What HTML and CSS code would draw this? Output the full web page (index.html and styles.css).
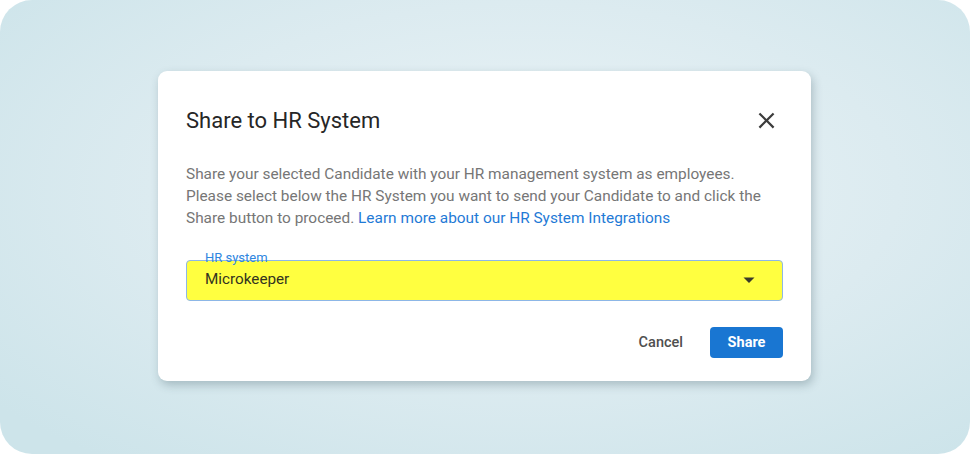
FILE: index.html
```html
<!DOCTYPE html>
<html lang="en">
<head>
<meta charset="utf-8">
<title>Share to HR System</title>
<link rel="stylesheet" href="styles.css">
</head>
<body>
<div class="stage">
  <div class="dialog">
    <div class="header">
      <h2 class="title">Share to HR System</h2>
      <button class="close" aria-label="Close">
        <svg width="27" height="27" viewBox="0 0 24 24"><path d="M19 6.41 17.59 5 12 10.59 6.41 5 5 6.41 10.59 12 5 17.59 6.41 19 12 13.41 17.59 19 19 17.59 13.41 12z" fill="#3c3c3c"/></svg>
      </button>
    </div>
    <p class="desc">Share your selected Candidate with your HR management system as employees. Please select below the HR System you want to send your Candidate to and click the Share button to proceed. <a href="#" class="link">Learn more about our HR System Integrations</a></p>
    <div class="select">
      <span class="select-label">HR system</span>
      <span class="select-value">Microkeeper</span>
      <svg class="arrow" width="24" height="24" viewBox="0 0 24 24"><path d="M6.5 9.5l5.5 5.5 5.5-5.5z" fill="#3a3a2a"/></svg>
    </div>
    <div class="actions">
      <button class="btn-text">Cancel</button>
      <button class="btn-primary">Share</button>
    </div>
  </div>
</div>
</body>
</html>
```
FILE: styles.css
```css
html, body {
  margin: 0;
  padding: 0;
  background: #ffffff;
}
body {
  font-family: Roboto, "Noto Sans", Arial, sans-serif;
}
.stage {
  width: 970px;
  height: 454px;
  box-sizing: border-box;
  padding: 0 1px 2px 0;
  border-radius: 32px;
  background: radial-gradient(ellipse 70% 75% at 54% 42%, #ebf4f7 0%, #dcebf0 55%, #cde4ea 100%);
  display: flex;
  align-items: center;
  justify-content: center;
}
.dialog {
  width: 653px;
  height: 310px;
  box-sizing: border-box;
  background: #ffffff;
  border-radius: 9px;
  box-shadow: 2px 4px 10px rgba(40, 70, 80, 0.28);
  padding: 32px 28px 23px 28px;
  display: flex;
  flex-direction: column;
}
.header {
  display: flex;
  align-items: center;
  justify-content: space-between;
  height: 34px;
}
.title {
  margin: 0;
  font-size: 22px;
  font-weight: 400;
  color: #262626;
  letter-spacing: 0;
}
.close {
  border: none;
  background: none;
  padding: 0;
  width: 27px;
  height: 27px;
  margin-right: 3px;
  display: flex;
  cursor: pointer;
}
.desc {
  margin: 26px 0 0 0;
  padding-right: 8px;
  font-size: 15.4px;
  line-height: 22px;
  color: #767676;
}
.link {
  color: #1f7ad6;
  text-decoration: none;
}
.select {
  position: relative;
  margin-top: 31px;
  height: 41px;
  box-sizing: border-box;
  border: 1px solid #8db7e6;
  border-radius: 4px;
  background: #ffff40;
  display: flex;
  align-items: center;
  padding: 0 20px 0 18px;
}
.select-label {
  position: absolute;
  top: -11px;
  left: 13px;
  padding: 0 5px;
  font-size: 13px;
  line-height: 16px;
  color: #2f86e0;
  background: linear-gradient(#ffffff 62%, transparent 62%);
}
.select-value {
  flex: 1;
  font-size: 15.25px;
  color: #33331f;
  margin-top: -4px;
}
.arrow {
  display: block;
  margin-right: 1px;
  margin-top: -2px;
}
.actions {
  margin-top: 26px;
  display: flex;
  justify-content: flex-end;
  align-items: center;
  gap: 27px;
}
.btn-text {
  border: none;
  background: none;
  font-family: inherit;
  font-size: 14.5px;
  font-weight: 500;
  color: #4f4f4f;
  padding: 0;
}
.btn-primary {
  border: none;
  width: 73px;
  height: 31px;
  border-radius: 4px;
  background: #1976d2;
  color: #ffffff;
  font-family: inherit;
  font-size: 14.5px;
  font-weight: 700;
}
```
